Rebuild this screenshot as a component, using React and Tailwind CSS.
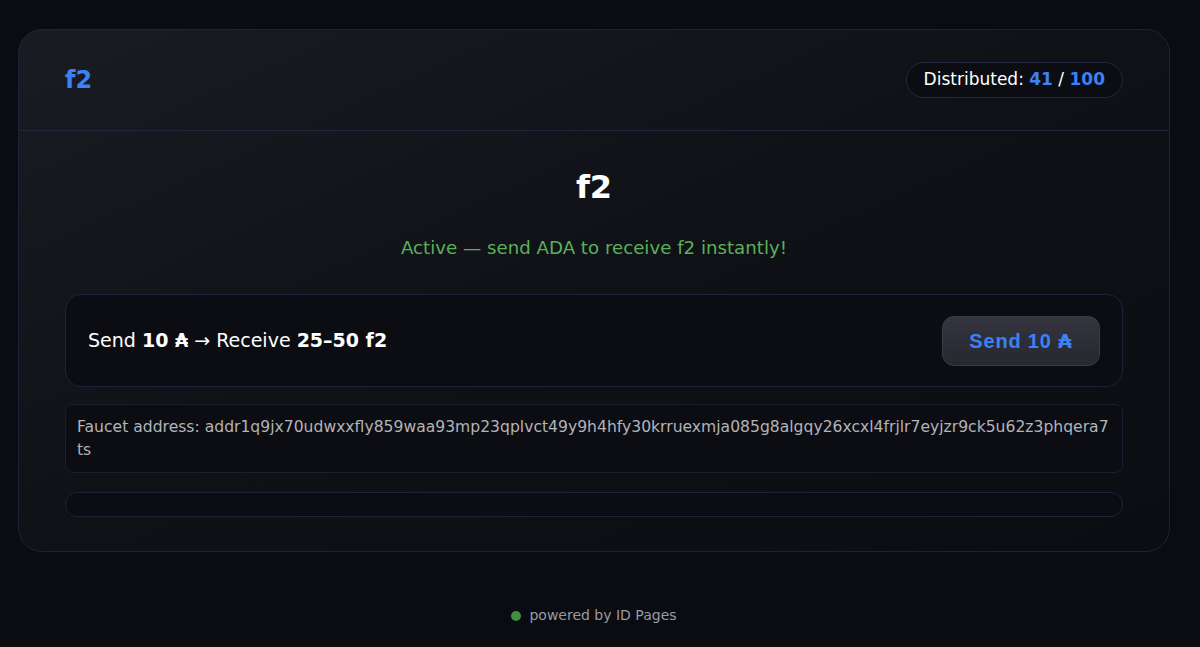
export default function App() {
  const font = { fontFamily: '"DejaVu Sans", Verdana, Tahoma, sans-serif' };
  return (
    <div className="min-h-[647px] w-full bg-[#0b0c11]" style={font}>
      <div className="w-[1188px] flex flex-col items-center">
        <div className="mt-[29px] w-[1152px] rounded-[24px] border border-[#1f2138] bg-gradient-to-br from-[#1b1c23] via-[#101117] to-[#0c0d12] overflow-hidden">
          <div className="h-[101px] flex items-center justify-between px-[46px] border-b border-[#23253a]">
            <div className="text-[24px] font-bold text-[#3b82f6]">f2</div>
            <div className="h-[36px] px-[17px] rounded-full border border-[#25273d] bg-[#0c0d13] flex items-center text-[17px] text-white">
              Distributed:&nbsp;<span className="font-bold text-[#3b82f6]">41</span>&nbsp;/&nbsp;<span className="font-bold text-[#3b82f6]">100</span>
            </div>
          </div>
          <div className="px-[46px] pb-[34px]">
            <div className="pt-[36px] text-center text-[32px] font-bold text-white leading-[40px]">f2</div>
            <div className="mt-[29px] text-center text-[18.2px] text-[#58b158] leading-[24px]">Active — send ADA to receive f2 instantly!</div>
            <div className="mt-[34px] h-[93px] rounded-[16px] border border-[#1f2138] bg-[#0c0d12] flex items-center justify-between pl-[22px] pr-[22px]">
              <div className="text-[19px] text-white">
                Send <b>10 ₳</b> → Receive <b>25–50 f2</b>
              </div>
              <button className="h-[50px] w-[158px] rounded-[12px] border border-[#3a3c48] bg-gradient-to-b from-[#34353e] to-[#26272f] text-[20px] tracking-[0.04em] font-bold text-[#3b82f6]" style={{ fontFamily: '"Liberation Sans", Arial, sans-serif' }}>
                Send 10 <span style={{ fontFamily: '"DejaVu Sans", sans-serif' }}>₳</span>
              </button>
            </div>
            <div className="mt-[17px] rounded-[8px] border border-[#1c1e30] bg-[#0c0d12] px-[11px] pt-[11px] pb-[10px] text-[15.6px] leading-[23px] text-[#b3b3b8] break-all">
              Faucet address: addr1q9jx70udwxxfly859waa93mp23qplvct49y9h4hfy30krruexmja085g8algqy26xcxl4frjlr7eyjzr9ck5u62z3phqera7ts
            </div>
            <div className="mt-[19px] h-[25px] rounded-[12px] border border-[#1f2138] bg-[#0c0d12]"></div>
          </div>
        </div>
        <div className="mt-[53px] flex items-center gap-[8px] text-[14px] text-[#9a9aa0]">
          <span className="w-[10px] h-[10px] rounded-full bg-[#3f8f3f]"></span>
          powered by ID Pages
        </div>
      </div>
    </div>
  );
}
